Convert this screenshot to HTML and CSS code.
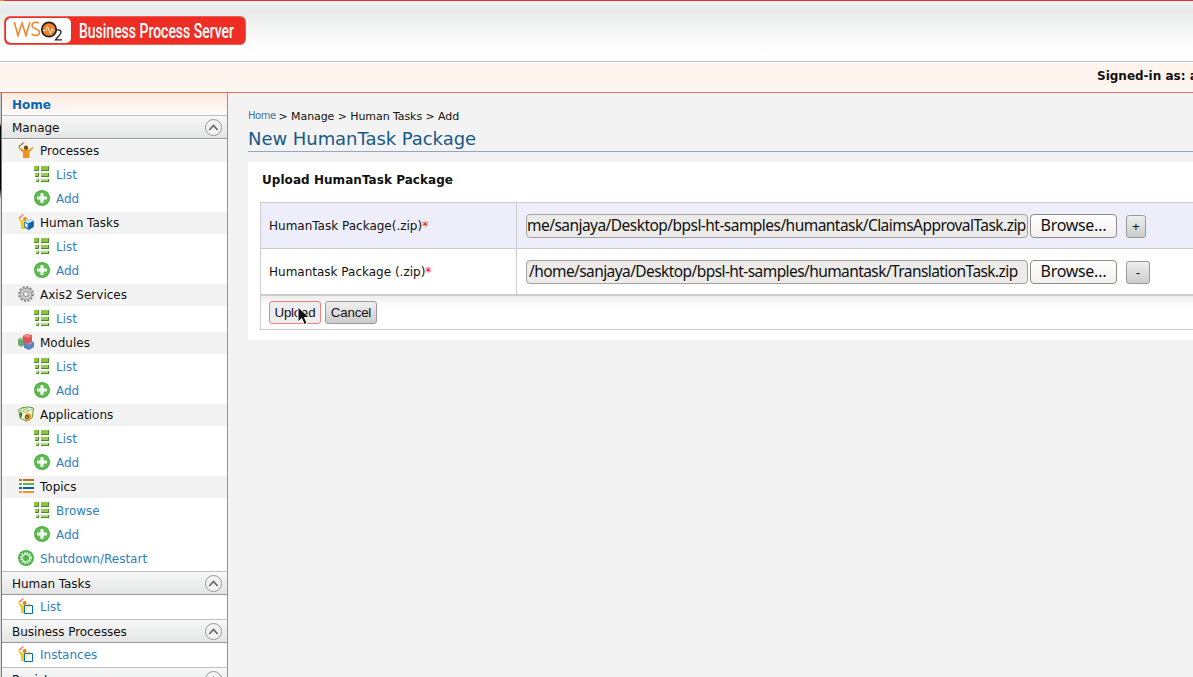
FILE: index.html
```html
<!DOCTYPE html>
<html lang="en">
<head>
<meta charset="utf-8">
<title>WSO2 Business Process Server</title>
<link rel="stylesheet" href="styles.css">
</head>
<body>
<svg class="defs" width="0" height="0" aria-hidden="true">
  <defs>
    <symbol id="list" viewBox="0 0 16 16">
      <path fill="#8cc63f" d="M0 0h5v5H0zM7 0h8v5H7z"/><path fill="#9bcb55" d="M1 7h4v4H1zM7 7h8v4H7z"/><path fill="#b3d884" d="M2 13h3v3H2zM7 13h8v3H7z"/>
      <path fill="#4c8a2b" d="M0 4h4V0h1v5H0zM7 4h7V0h1v5H7zM1 10h3V7h1v4H1zM7 10h7V7h1v4H7zM2 15h2v-2h1v3H2zM7 15h7v-2h1v3H7z"/>
    </symbol>
    <symbol id="add" viewBox="0 0 16 16">
      <circle cx="8" cy="8" r="8" fill="#4cb244"/><circle cx="8" cy="8" r="6.800" fill="#5cbf50"/><path fill="#fff" d="M6.500 3.200h3v3.300h3.300v3H9.500v3.300h-3V9.500H3.200v-3h3.300z"/>
    </symbol>
    <symbol id="process" viewBox="0 0 16 16">
      <path d="M.8 4.500 6 .6" stroke="#8a6914" stroke-width="1.200" stroke-dasharray="2.500 .5"/><path fill="#ee9420" d="M0 5.500 1.500 5l3.800 2.700h5L14.800 5l1 .8-4.300 4V16H5v-5.500z"/><circle cx="8" cy="5.800" r="2.200" fill="#70520a"/>
    </symbol>
    <symbol id="human" viewBox="0 0 16 16">
      <path d="M.8 4.300 5.500.6" stroke="#f26b3c" stroke-width="1.200"/><path fill="#f7cf12" d="M1 5l1.500-.3 3 2.500h3V15H3v-5z"/><circle cx="7" cy="5" r="2" fill="#ef8c22"/><path fill="#2d87c8" d="m11.500 5 4.500 2-.5 6-5 3L6 13V8z"/><path fill="#c4e0f3" d="m11.500 5 4 2-5 2.500-4-2z"/><path fill="#1261a0" d="m10.500 9.500 5-2.500v6l-5 3z"/><path fill="#fff" d="m7 9 2.500 1.500v3L7 12z"/>
    </symbol>
    <symbol id="gear" viewBox="0 0 16 16">
      <circle cx="8" cy="8" r="6.900" fill="none" stroke="#8a8a8a" stroke-width="2.200" stroke-dasharray="2.100 1.513"/><circle cx="8" cy="8" r="4.400" fill="none" stroke="#8a8a8a" stroke-width="3.600"/><circle cx="8" cy="8" r="4.300" fill="none" stroke="#cbcbcb" stroke-width="2.600"/><circle cx="8" cy="8" r="2.400" fill="#f4f4f4" stroke="#888" stroke-width=".8"/>
    </symbol>
    <symbol id="modules" viewBox="0 0 16 16">
      <path fill="#6fa673" d="m0 5 3.500-2 3 1v7l-3 2L0 11z"/><path fill="#b0d3ae" d="m0 5 3.500-2 3 1L4 6z"/><path fill="#5a86bb" d="m6 8 5-2 5 2v5l-5 3-5-2z"/><path fill="#9dbce0" d="m7 9 4-2 4.500 1-4 2.500z"/><path fill="#e35254" d="m5 2 3-2 6 1v7l-4 2-5-2z"/><path fill="#f48c88" d="m5 2 3-1.500L14 2l-4 1.500z"/>
    </symbol>
    <symbol id="apps" viewBox="0 0 16 16">
      <path fill="#eef5d8" stroke="#63983a" d="M.8 3.500 5 1.500l5-.5 5.500 1-1.200 9.500L8.500 15.300 2 12z"/><path d="m1 3.500 7 3 7-4M4 2l7 3M11 1.500 4.500 5" stroke="#a0c872" fill="none"/><path fill="#3d7b24" d="m2 6 2.500 1L3.500 11.500H2z"/><path fill="#ec9a28" d="m9.500 7 4 2-1 4.500-4 1.500-2-2.500 1-4z"/><circle cx="9" cy="11" r="2" fill="#553c14"/><circle cx="9" cy="11.300" r=".9" fill="#f6e27c"/>
    </symbol>
    <symbol id="topics" viewBox="0 0 16 16">
      <path fill="#cb6d21" d="M1 1h3v2H1zM5 1h11v2H5z"/><path fill="#55b848" d="M1 5h3v2H1zM5 5h11v2H5z"/><path fill="#0460a9" d="M1 9h3v2H1zM5 9h11v2H5z"/><path fill="#f7941e" d="M1 13h3v2H1zM5 13h11v2H5z"/>
    </symbol>
    <symbol id="restart" viewBox="0 0 16 16">
      <circle cx="8" cy="8" r="8" fill="#4fb547"/><circle cx="8" cy="8" r="5" fill="none" stroke="#fff" stroke-width="1.800" stroke-dasharray="1.400 1.218"/><circle cx="8" cy="8" r="3.700" fill="none" stroke="#fff" stroke-width="1"/>
    </symbol>
    <symbol id="task" viewBox="0 0 16 16">
      <path d="M.8 4.300 5.500.6" stroke="#f26b3c" stroke-width="1.200"/><path fill="#f5cc0b" d="M0 4.500 2 5l3.500 2.500h3L12 5v3l-2 1v6H3v-5z"/><circle cx="6.700" cy="5" r="2" fill="#e57d21"/><path fill="#fff" fill-opacity=".75" stroke="#0a6cb0" d="M6.500 7.500h8v8h-8z"/>
    </symbol>
    <symbol id="collapse" viewBox="0 0 18 18">
      <circle cx="8.500" cy="8.500" r="8" fill="#f4f4f4" stroke="#969696"/><path d="m4.300 11 4.200-4.500 4.200 4.500" fill="none" stroke="#666" stroke-width="1.700"/>
    </symbol>
  </defs>
</svg>

<header class="header">
  <svg class="logo" width="242" height="29" viewBox="0 0 242 29" role="img" aria-label="WSO2 Business Process Server">
    <rect width="242" height="29" rx="6" fill="#f58a80"/>
    <rect x=".5" y=".5" width="241" height="28" rx="5.500" fill="#ee2e24"/>
    <rect x="2" y="2" width="65" height="25" rx="5" fill="#fff"/>
    <path d="M10.300 6l3.700 13.500L18 7l4 12.500L26 6M35 7.200c-3.500-2-7-.5-7 2.300 0 4 7.500 2.800 7.500 6.700 0 3.300-4.500 4.300-8 2" fill="none" stroke="#f58025" stroke-width="1.500"/>
    <circle cx="45" cy="13.500" r="7.200" fill="#f58025" stroke="#222" stroke-width="1.700"/>
    <path d="M39 14.500h3l1.500-4 3 7 1.500-5 1 2h2" fill="none" stroke="#fff" stroke-width=".9"/>
    <path d="M51.500 15.500c1-2.500 5.500-2.200 5.500.8 0 2.500-3 4-5.500 7.500h6.500" fill="none" stroke="#222" stroke-width="1.300"/>
    <text class="logo-text" x="75" y="22" textLength="155" lengthAdjust="spacingAndGlyphs">Business Process Server</text>
  </svg>
</header>
<div class="userbar"><span>Signed-in as: admin@localhost</span></div>

<div class="page">
  <div class="edge"></div>
  <nav class="menu">
    <a class="home">Home</a>
    <h2 class="section">Manage<svg width="18" height="18"><use href="#collapse"/></svg></h2>
    <div class="item group"><svg class="icon"><use href="#process"/></svg>Processes</div>
    <a class="item sub"><svg class="icon"><use href="#list"/></svg>List</a>
    <a class="item sub"><svg class="icon"><use href="#add"/></svg>Add</a>
    <div class="item group"><svg class="icon"><use href="#human"/></svg>Human Tasks</div>
    <a class="item sub"><svg class="icon"><use href="#list"/></svg>List</a>
    <a class="item sub"><svg class="icon"><use href="#add"/></svg>Add</a>
    <div class="item group"><svg class="icon"><use href="#gear"/></svg>Axis2 Services</div>
    <a class="item sub"><svg class="icon"><use href="#list"/></svg>List</a>
    <div class="item group"><svg class="icon"><use href="#modules"/></svg>Modules</div>
    <a class="item sub"><svg class="icon"><use href="#list"/></svg>List</a>
    <a class="item sub"><svg class="icon"><use href="#add"/></svg>Add</a>
    <div class="item group"><svg class="icon"><use href="#apps"/></svg>Applications</div>
    <a class="item sub"><svg class="icon"><use href="#list"/></svg>List</a>
    <a class="item sub"><svg class="icon"><use href="#add"/></svg>Add</a>
    <div class="item group"><svg class="icon"><use href="#topics"/></svg>Topics</div>
    <a class="item sub"><svg class="icon"><use href="#list"/></svg>Browse</a>
    <a class="item sub"><svg class="icon"><use href="#add"/></svg>Add</a>
    <a class="item"><svg class="icon"><use href="#restart"/></svg>Shutdown/Restart</a>
    <h2 class="section">Human Tasks<svg width="18" height="18"><use href="#collapse"/></svg></h2>
    <a class="item"><svg class="icon"><use href="#task"/></svg>List</a>
    <h2 class="section">Business Processes<svg width="18" height="18"><use href="#collapse"/></svg></h2>
    <a class="item"><svg class="icon"><use href="#task"/></svg>Instances</a>
    <h2 class="section">Registry<svg width="18" height="18"><use href="#collapse"/></svg></h2>
  </nav>

  <main class="content">
    <div class="crumbs"><a>Home</a><span>&gt; Manage &gt; Human Tasks &gt; Add</span></div>
    <h1>New HumanTask Package</h1>
    <section class="panel">
      <h3>Upload HumanTask Package</h3>
      <div class="table">
        <div class="row tinted">
          <div class="label">HumanTask Package(.zip)<b>*</b></div>
          <div class="field">
            <div class="path scrolled"><span>me/sanjaya/Desktop/bpsl-ht-samples/humantask/ClaimsApprovalTask.zip</span></div>
            <button class="browse">Browse…</button>
            <button class="small plus">+</button>
          </div>
        </div>
        <div class="row">
          <div class="label">Humantask Package (.zip)<b>*</b></div>
          <div class="field">
            <div class="path"><span>/home/sanjaya/Desktop/bpsl-ht-samples/humantask/TranslationTask.zip</span></div>
            <button class="browse">Browse…</button>
            <button class="small minus">-</button>
          </div>
        </div>
        <div class="actions">
          <button class="btn hover">Upload
            <svg class="cursor" width="14" height="20" viewBox="0 0 14 20"><path d="M1 1v15l3.700-3.500 2.600 6 2.800-1.200-2.600-5.800h5z" fill="#111" stroke="#fff"/></svg>
          </button>
          <button class="btn">Cancel</button>
        </div>
      </div>
    </section>
  </main>
</div>
</body>
</html>
```
FILE: styles.css
```css
* { box-sizing: border-box; }
html, body { height: 100%; }
body {
  margin: 0;
  display: flex;
  flex-direction: column;
  overflow: hidden;
  background: #f3f3f3;
  color: #111;
  font: 12px "DejaVu Sans", sans-serif;
}
.defs { display: none; }
h1, h2, h3 { margin: 0; font-weight: normal; }

.header {
  flex: none;
  height: 62px;
  padding: 16px 4px 0;
  border-bottom: 1px solid #bcc0c6;
  background:
    linear-gradient(90deg, #f7941e 4px, #ee2e24 4px) 0 0 / 100% 1px no-repeat,
    linear-gradient(#f2f3f3, #e9eaea 10px, #fdfdfd 45px, #fff);
}
.logo { display: block; }
.logo-text { font: 500 21px Roboto, sans-serif; fill: #fff; }

.userbar {
  flex: none;
  height: 31px;
  padding: 6px 0 0 1097px;
  overflow: hidden;
  border-top: 1px solid #fff;
  border-bottom: 1px solid #f27050;
  background: linear-gradient(#fff3ec, #fff6f1);
  font-weight: bold;
  white-space: nowrap;
}

.page { flex: 1; display: flex; min-height: 0; }
.edge {
  width: 2px;
  border-right: 1px solid #777;
  background: linear-gradient(#ccc 30px, #000 34px, #000 96px, #ddd 106px);
}
.menu {
  flex: none;
  width: 226px;
  border-right: 1px solid #ee7059;
  background: #fff;
}
.home {
  display: block;
  height: 22px;
  padding: 1px 0 0 10px;
  background: linear-gradient(#ffeae1, #fffaf7);
  color: #0568b4;
  font-weight: bold;
  line-height: 23px;
}
.section {
  display: flex;
  justify-content: space-between;
  align-items: center;
  height: 24px;
  padding: 2px 4px 0 10px;
  border-top: 1px solid #bcbfc5;
  border-bottom: 1px solid #999;
  background: linear-gradient(#f8f8f8, #e3e4e4);
  font-size: 12px;
  letter-spacing: -.06px;
}
.item {
  display: flex;
  align-items: center;
  gap: 6px;
  height: 24px;
  padding-left: 16px;
  border: solid #fff;
  border-width: 1px 0;
  color: #2f7fc2;
}
.icon { width: 16px; height: 16px; margin-bottom: 2px; }
.sub { padding-left: 32px; }
.group { background: #f3f3f3; color: #111; }

.content { flex: 1; min-width: 0; padding: 16px 0 0 20px; overflow: hidden; white-space: nowrap; }
.crumbs { display: flex; gap: 3px; height: 16px; font-size: 11px; letter-spacing: -.08px; line-height: 15px; }
.crumbs a { color: #3a73a8; font-size: 10px; letter-spacing: -.5px; line-height: 13px; }
.content h1 {
  height: 27px;
  border-bottom: 1px solid #94a6c8;
  color: #155a88;
  font-size: 18px;
  letter-spacing: -.05px;
  line-height: 28px;
}
.panel { height: 178px; margin-top: 10px; padding: 10px 0 0 12px; background: #fff; }
.panel h3 { height: 30px; padding-left: 2px; font-weight: bold; font-size: 12px; letter-spacing: .05px; line-height: 16px; }
.table { border: 1px solid #ccc; border-right: 0; }
.row { display: flex; height: 46px; border-bottom: 1px solid #ccc; }
.row.tinted { background: #eeeefa; }
.label { width: 256px; padding: 16px 0 0 8px; border-right: 1px solid #ccc; }
.label b { color: red; font-weight: normal; }
.field { display: flex; align-items: center; padding-left: 9px; }
.path {
  width: 502px;
  height: 24px;
  padding-left: 2px;
  overflow: hidden;
  border: 1px solid #a5a19d;
  border-radius: 4px;
  background: #edebe9;
  font: 15.500px/21px "Noto Sans", sans-serif;
  letter-spacing: -.58px;
}
.path.scrolled { padding-left: 0; letter-spacing: -.54px; }
button { margin: 0; padding: 0; border: 1px solid #999; border-radius: 3px; color: #111; }
.browse {
  width: 87px;
  height: 24px;
  padding-bottom: 2px;
  margin-left: 2px;
  border-color: #8f8b87;
  border-radius: 4px;
  background: linear-gradient(#fff, #f1f0ef);
  font: 16px/20px "Noto Sans", sans-serif;
  letter-spacing: -.3px;
}
.small {
  height: 23px;
  margin: 1px 0 0 9px;
  background: linear-gradient(#eee, #ccc);
  font: 13.333px "Liberation Sans", sans-serif;
}
.plus { width: 20px; }
.minus { width: 24px; }
.actions {
  display: flex;
  gap: 4px;
  height: 34px;
  padding: 5px 0 0 8px;
  border-top: 1px solid #ccc;
  background: linear-gradient(#eee, #fff 12px);
}
.btn {
  position: relative;
  width: 52px;
  height: 23px;
  background: linear-gradient(#f0f0f0, #ccc);
  font: 13.333px "Liberation Sans", sans-serif;
  letter-spacing: -.2px;
}
.btn.hover { border-color: #f58078; background: #eee; }
.cursor { position: absolute; left: 27px; top: 4px; }
```
